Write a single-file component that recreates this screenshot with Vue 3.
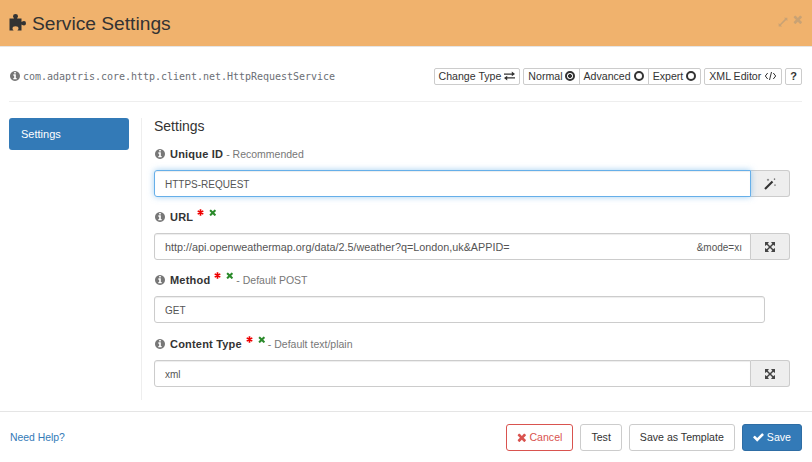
<script setup>
const info = 'M1152 1376v-160q0-14-9-23t-23-9h-96v-512q0-14-9-23t-23-9h-320q-14 0-23 9t-9 23v160q0 14 9 23t23 9h96v320h-96q-14 0-23 9t-9 23v160q0 14 9 23t23 9h448q14 0 23-9t9-23zm-128-896v-160q0-14-9-23t-23-9h-192q-14 0-23 9t-9 23v160q0 14 9 23t23 9h192q14 0 23-9t9-23zm640 416q0 209-103 385.5t-279.5 279.5-385.5 103-385.5-103-279.5-279.5-103-385.5 103-385.5 279.5-279.5 385.5-103 385.5 103 279.5 279.5 103 385.5z'
const arrows = 'M1411 541l-355 355 355 355 144-144q29-31 70-14 39 17 39 59v448q0 26-19 45t-45 19h-448q-42 0-59-40-17-39 14-69l144-144-355-355-355 355 144 144q31 30 14 69-17 40-59 40h-448q-26 0-45-19t-19-45v-448q0-42 40-59 39-17 69 14l144 144 355-355-355-355-144 144q-19 19-45 19-12 0-24-5-40-17-40-59v-448q0-26 19-45t45-19h448q42 0 59 40 17 39-14 69l-144 144 355 355 355-355-144-144q-31-30-14-69 17-40 59-40h448q26 0 45 19t19 45v448q0 42-39 59-13 5-25 5-26 0-45-19z'
const times = 'M1490 1322q0 40-28 68l-136 136q-28 28-68 28t-68-28l-294-294-294 294q-28 28-68 28t-68-28l-136-136q-28-28-28-68t28-68l294-294-294-294q-28-28-28-68t28-68l136-136q28-28 68-28t68 28l294 294 294-294q28-28 68-28t68 28l136 136q28 28 28 68t-28 68l-294 294 294 294q28 28 28 68z'
const check = 'M1671 566q0 40-28 68l-724 724-136 136q-28 28-68 28t-68-28l-136-136-362-362q-28-28-28-68t28-68l136-136q28-28 68-28t68 28l294 295 656-657q28-28 68-28t68 28l136 136q28 28 28 68z'
const puzzle = 'M0 4.5H4.5C4.5 4 3.5 3.3 3.5 2.2A2.5 2.2 0 0 1 8.5 2.2C8.5 3.3 7.5 4 7.5 4.5H12V8C12.5 8 13 7 14.5 7A2 2.2 0 0 1 14.5 11.4C13 11.4 12.5 10.5 12 10.5V16.5H8C8 16 9 15.5 9 14.5A3 2.2 0 0 0 3 14.5C3 15.5 4 16 4 16.5H0Z'

const fields = [
  { label: 'Unique ID', note: '- Recommended', value: 'HTTPS-REQUEST', addon: 'magic', focus: true },
  { label: 'URL', req: true, value: 'http://api.openweathermap.org/data/2.5/weather?q=London,uk&APPID=', tail: '&mode=xı', addon: 'arrows' },
  { label: 'Method', req: true, note: '- Default POST', value: 'GET', short: true },
  { label: 'Content Type', req: true, note: '- Default text/plain', value: 'xml', addon: 'arrows' }
]
</script>

<template>
  <div class="modal">
    <header class="head">
      <h4 class="title">
        <svg class="puzzle" viewBox="0 0 17 17"><path :d="puzzle" /></svg>
        Service Settings
      </h4>
      <div class="win">
        <svg class="expand" viewBox="0 0 16 16">
          <path d="M9.5 1h5.5v5.5l-1.9-1.9-8.5 8.5 1.9 1.9H1V9.500l1.900 1.900 8.500-8.500z" />
        </svg>
        <svg class="close" viewBox="200 300 1300 1240"><path :d="times" /></svg>
      </div>
    </header>

    <div class="content">
      <div class="toolbar">
        <div class="classname">
          <svg class="info" viewBox="128 128 1536 1536"><path :d="info" /></svg>
          com.adaptris.core.http.client.net.HttpRequestService
        </div>
        <div class="tools">
          <button class="tool">
            Change Type
            <svg class="exch" viewBox="0 0 12 10">
              <path d="M0 2.200h8.500V0.200L12 2.900 8.500 5.200V3.700H0zM12 6.300H3.500V4.800L0 7.100l3.500 2.700V7.800H12z" />
            </svg>
          </button>
          <div class="group">
            <button class="tool">Normal <span class="radio on"></span></button>
            <button class="tool">Advanced <span class="radio"></span></button>
            <button class="tool">Expert <span class="radio"></span></button>
          </div>
          <button class="tool">
            XML Editor
            <svg class="code" viewBox="0 0 12 10">
              <path d="M3.200 2 .8 5l2.400 3M8.800 2l2.400 3-2.400 3M7 1 5 9" />
            </svg>
          </button>
          <button class="tool help">?</button>
        </div>
      </div>

      <div class="main">
        <nav class="side">
          <a class="tab">Settings</a>
        </nav>
        <section class="form">
          <h5 class="legend">Settings</h5>
          <div class="field" v-for="f in fields" :key="f.label">
            <div class="label">
              <svg class="info" viewBox="128 128 1536 1536"><path :d="info" /></svg>
              <b>{{ f.label }}</b>
              <template v-if="f.req">
                <svg class="star" viewBox="0 0 10 10">
                  <path d="M5 .5v9M1 2.700l8 4.600M9 2.700l-8 4.600" />
                </svg>
                <svg class="piece" viewBox="200 300 1300 1240"><path :d="times" /></svg>
              </template>
              <span class="note" v-if="f.note">{{ f.note }}</span>
            </div>
            <div class="inputs" :class="{ short: f.short }">
              <div class="input" :class="{ focus: f.focus, joined: f.addon, url: f.tail }">
                <span class="val">{{ f.value }}</span>
                <span class="tail" v-if="f.tail">{{ f.tail }}</span>
              </div>
              <div class="addon" v-if="f.addon">
                <svg v-if="f.addon === 'arrows'" class="ico" viewBox="128 128 1536 1536"><path :d="arrows" /></svg>
                <svg v-else class="ico magic" viewBox="0 0 12 12">
                  <path d="M1 11 8.500 3.500" class="wand" />
                  <path d="M4 0.500l.4 1 1 .4-1 .4-.4 1-.4-1-1-.4 1-.4zM10.500 0l.3.8.8.3-.8.3-.3.8-.3-.8-.8-.3.8-.3zM11 6l.3.8.7.3-.7.3-.3.8-.3-.8-.7-.3.7-.3z" />
                </svg>
              </div>
            </div>
          </div>
        </section>
      </div>
    </div>

    <footer class="foot">
      <a class="helplink">Need Help?</a>
      <div class="actions">
        <button class="btn cancel">
          <svg viewBox="200 300 1300 1240"><path :d="times" /></svg> Cancel
        </button>
        <button class="btn">Test</button>
        <button class="btn">Save as Template</button>
        <button class="btn save">
          <svg viewBox="100 300 1600 1300"><path :d="check" /></svg> Save
        </button>
      </div>
    </footer>
  </div>
</template>

<style scoped>
.modal {
  width: 812px;
  height: 462px;
  background: #fff;
  font-family: "Liberation Sans", Arial, sans-serif;
  font-size: 11px;
  color: #333;
  overflow: hidden;
}
svg {
  display: inline-block;
  fill: currentColor;
}

.head {
  height: 47px;
  box-sizing: border-box;
  background: #f0b26d;
  border-bottom: 1px solid #e5e5e5;
  display: flex;
  justify-content: space-between;
  padding: 0 10px 0 9px;
}
.title {
  margin: 0;
  font-size: 19.2px;
  font-weight: 400;
  line-height: 47px;
  display: flex;
  align-items: center;
  gap: 5px;
}
.puzzle {
  width: 18px;
  height: 17px;
  margin-top: -2px;
}
.win {
  display: flex;
  gap: 5px;
  padding-top: 15px;
  color: #c9a274;
}
.expand {
  width: 10px;
  height: 10px;
  margin-top: 2px;
}
.close {
  width: 9px;
  height: 9px;
}

.content {
  padding: 0 10px 0 9px;
}
.toolbar {
  height: 55px;
  box-sizing: border-box;
  border-bottom: 1px solid #eee;
  display: flex;
  justify-content: space-between;
  align-items: center;
  padding-top: 4px;
}
.classname {
  font-family: "DejaVu Sans Mono", monospace;
  font-size: 10px;
  letter-spacing: -0.02px;
  color: #6b6f76;
  padding-left: 1px;
  display: flex;
  align-items: center;
  gap: 3px;
}
.info {
  width: 10px;
  height: 10px;
  color: #777;
  flex: none;
}
.tools {
  display: flex;
  gap: 3px;
}
.tool {
  height: 17px;
  box-sizing: border-box;
  padding: 0 4px;
  border: 1px solid #ccc;
  border-radius: 2px;
  background: #fff;
  color: #333;
  font: 10.6px "Liberation Sans", Arial, sans-serif;
  display: flex;
  align-items: center;
  gap: 3px;
  white-space: nowrap;
}
.group {
  display: flex;
}
.group .tool {
  border-radius: 0;
  margin-left: -1px;
}
.group .tool:first-child {
  margin-left: 0;
  gap: 2px;
  border-radius: 2px 0 0 2px;
}
.group .tool:last-child {
  border-radius: 0 2px 2px 0;
}
.radio {
  width: 10px;
  height: 10px;
  box-sizing: border-box;
  border: 2px solid #333;
  border-radius: 50%;
}
.radio.on {
  background: radial-gradient(circle, #333 0 1.8px, #fff 2.2px);
}
.exch {
  width: 11px;
  height: 10px;
}
.code {
  width: 13px;
  height: 10px;
  fill: none;
  stroke: #333;
  stroke-width: 1;
}
.help {
  font-weight: 700;
  font-size: 11px;
}

.main {
  display: flex;
  margin-top: 16px;
  height: 282px;
}
.side {
  width: 132px;
  flex: none;
  border-right: 1px solid #eee;
  margin-right: 12px;
}
.tab {
  display: block;
  width: 120px;
  height: 32px;
  line-height: 32px;
  box-sizing: border-box;
  padding-left: 12px;
  border-radius: 3px;
  background: #337ab7;
  color: #fff;
}
.form {
  flex: 1;
  padding-right: 12px;
}
.legend {
  margin: 0;
  font-size: 14px;
  font-weight: 400;
  line-height: 16px;
}
.field {
  margin-top: 12px;
}
.field:last-child {
  margin-top: 13px;
}
.label {
  height: 16px;
  display: flex;
  align-items: center;
  font-size: 11px;
  margin: 0 0 8px 1px;
}
.label .info {
  margin-right: 5px;
}
.label b {
  letter-spacing: .2px;
}
.star {
  width: 7px;
  height: 7px;
  margin: -10px 0 0 4px;
  fill: none;
  stroke: #e00;
  stroke-width: 2.4;
}
.piece {
  width: 7px;
  height: 7px;
  margin: -10px 0 0 5px;
  color: #2a8a2a;
}
.note {
  font-size: 10.5px;
  color: #777;
  margin-left: 3px;
}
.inputs {
  display: flex;
  height: 27px;
}
.inputs.short {
  width: 611px;
}
.input {
  flex: 1;
  box-sizing: border-box;
  border: 1px solid #ccc;
  border-radius: 3px;
  padding: 0 10px;
  line-height: 27px;
  font-size: 10px;
  color: #555;
  display: flex;
  justify-content: space-between;
  white-space: nowrap;
  box-shadow: inset 0 1px 1px rgba(0, 0, 0, .075);
}
.input.joined {
  border-radius: 3px 0 0 3px;
}
.input.focus {
  border-color: #66afe9;
  box-shadow: inset 0 1px 1px rgba(0, 0, 0, .075), 0 0 6px rgba(102, 175, 233, .6);
  position: relative;
}
.input.url .val {
  font-size: 10.8px;
}
.tail {
  margin-right: -2px;
}
.addon {
  width: 39px;
  box-sizing: border-box;
  border: 1px solid #ccc;
  border-left: 0;
  border-radius: 0 3px 3px 0;
  background: #eee;
  display: flex;
  align-items: center;
  justify-content: center;
}
.ico {
  width: 10px;
  height: 10px;
  color: #444;
}
.ico.magic {
  width: 12px;
  height: 12px;
}
.wand {
  fill: none;
  stroke: #333;
  stroke-width: 2.2;
}

.foot {
  margin-top: 11px;
  height: 51px;
  box-sizing: border-box;
  border-top: 1px solid #e5e5e5;
  display: flex;
  justify-content: space-between;
  align-items: center;
  padding: 0 10px;
}
.helplink {
  font-size: 10.4px;
  color: #337ab7;
}
.actions {
  display: flex;
  gap: 7px;
}
.btn {
  height: 27px;
  box-sizing: border-box;
  padding: 0 10px;
  border: 1px solid #ccc;
  border-radius: 3px;
  background: #fff;
  color: #333;
  font: 10.6px "Liberation Sans", Arial, sans-serif;
  display: flex;
  align-items: center;
  gap: 3px;
}
.btn svg {
  width: 9px;
  height: 9px;
}
.cancel {
  border-color: #d9534f;
  color: #d9534f;
}
.save {
  background: #337ab7;
  border-color: #2e6da4;
  color: #fff;
}
.save svg {
  width: 11px;
}
</style>
